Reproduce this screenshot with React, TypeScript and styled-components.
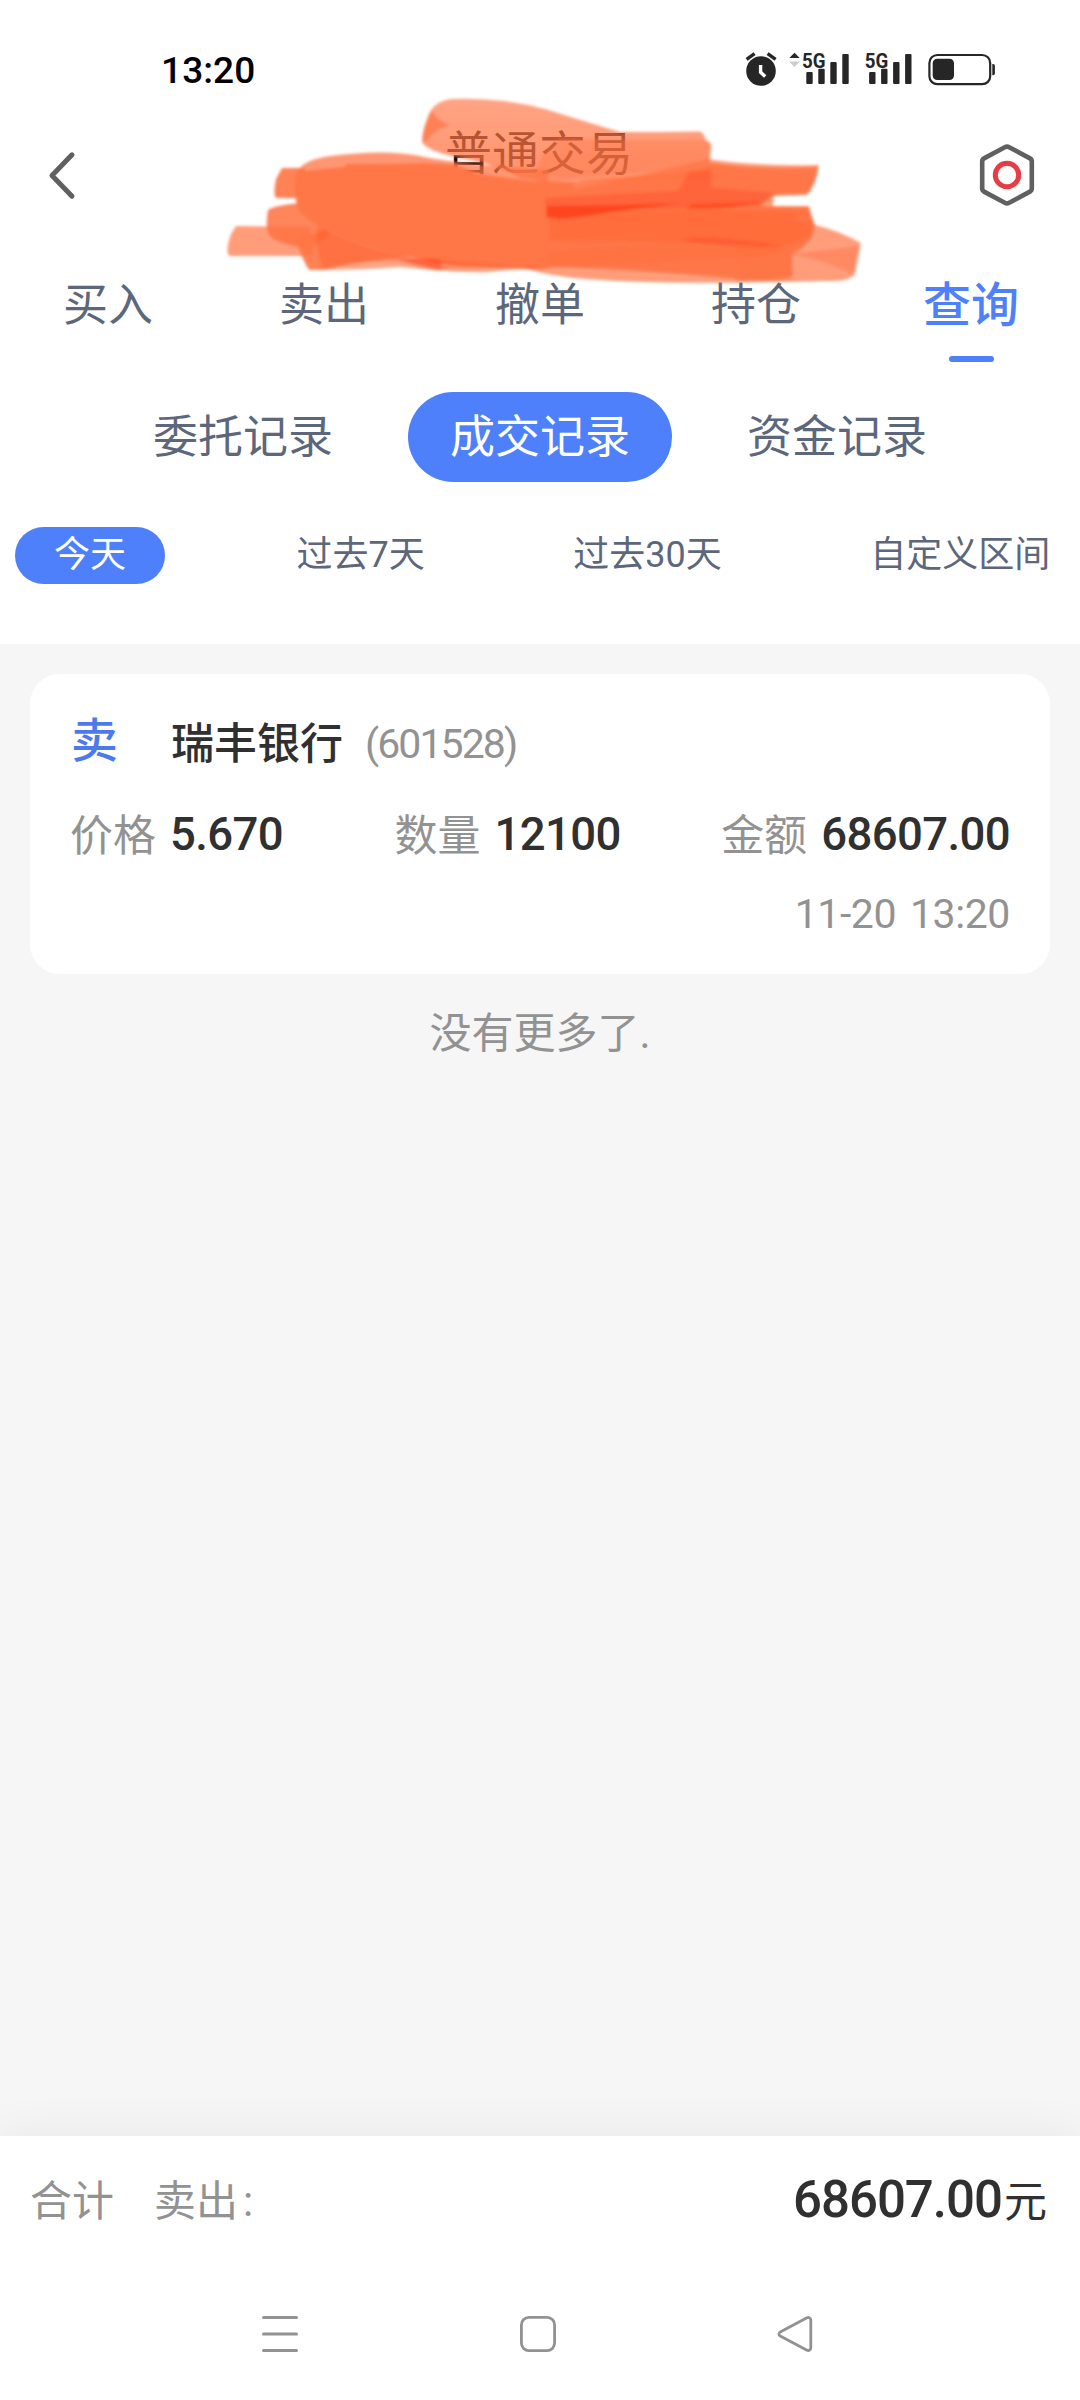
import React from 'react';
import styled, { createGlobalStyle } from 'styled-components';

const BLUE = '#4f80fc';
const SLATE = '#5d677c';
const GREY = '#929292';
const INK = '#303030';

const GlobalStyle = createGlobalStyle`
  *, *::before, *::after { box-sizing: border-box; }
  body {
    margin: 0;
    background: #fff;
    font-family: Roboto, 'Noto Sans CJK SC', sans-serif;
  }
  svg { display: block; }
`;

const Screen = styled.div`
  position: relative;
  display: flex;
  flex-direction: column;
  width: 1080px;
  height: 2400px;
  overflow: hidden;
  background: #fff;
`;

const StatusBar = styled.div`
  display: flex;
  justify-content: space-between;
  align-items: center;
  height: 100px;
  padding: 40px 84px 0 161px;
`;

const Clock = styled.span`
  padding-top: 1px;
  font-size: 37px;
  line-height: 60px;
  font-weight: 500;
  letter-spacing: 0.1px;
  color: #000;
`;

const Header = styled.header`
  display: grid;
  grid-template-columns: 56px 1fr 56px;
  align-items: center;
  height: 150px;
  padding: 0 45px 0 47px;
`;

const Title = styled.h1`
  margin: 0 4px 42px 0;
  text-align: center;
  font-size: 47px;
  line-height: 60px;
  font-weight: 400;
  color: #000;
`;

const Redaction = styled.svg`
  position: absolute;
  left: 215px;
  top: 85px;
`;

const Tabs = styled.nav`
  display: grid;
  grid-template-columns: repeat(5, 1fr);
  height: 112px;
  padding: 25px 0 0 0;
`;

const Tab = styled.div<{ $active?: boolean }>`
  display: flex;
  flex-direction: column;
  align-items: center;
  padding-right: ${(p) => (p.$active ? 2 : 0)}px;
  font-size: ${(p) => (p.$active ? 48 : 45)}px;
  line-height: 61px;
  font-weight: ${(p) => (p.$active ? 500 : 400)};
  color: ${(p) => (p.$active ? BLUE : SLATE)};
`;

const Underline = styled.span`
  width: 45px;
  height: 6px;
  margin-top: 20px;
  border-radius: 3px;
  background: ${BLUE};
`;

const SubTabs = styled.nav`
  display: flex;
  justify-content: center;
  gap: 33px;
  height: 90px;
  margin-top: 30px;
`;

const SubTab = styled.div<{ $active?: boolean }>`
  width: 264px;
  border-radius: 45px;
  text-align: center;
  font-size: 45px;
  line-height: 92px;
  color: ${(p) => (p.$active ? '#fff' : SLATE)};
  background: ${(p) => (p.$active ? BLUE : 'transparent')};
`;

const Ranges = styled.div`
  display: flex;
  gap: 148.5px;
  height: 162px;
  padding: 45px 0 60px 15px;
`;

const Range = styled.div<{ $active?: boolean }>`
  height: 57px;
  width: ${(p) => (p.$active ? '150px' : 'auto')};
  margin-right: ${(p) => (p.$active ? '-17px' : '0')};
  border-radius: 28.5px;
  text-align: center;
  white-space: nowrap;
  font-size: 36px;
  line-height: 56px;
  color: ${(p) => (p.$active ? '#fff' : SLATE)};
  background: ${(p) => (p.$active ? BLUE : 'transparent')};
`;

const Content = styled.main`
  flex: 1;
  padding: 30px 30px 0;
  background: #f6f6f6;
`;

const Card = styled.article`
  display: flex;
  flex-direction: column;
  height: 300px;
  padding: 40px 40px 30px;
  border-radius: 30px;
  background: #fff;
`;

const StockRow = styled.div`
  display: flex;
  align-items: center;
  height: 60px;
`;

const Side = styled.span`
  width: 101px;
  font-size: 47px;
  line-height: 56px;
  padding: 0 0 6px 1px;
  font-weight: 500;
  color: #4d79ef;
`;

const StockName = styled.span`
  font-size: 43px;
  line-height: 60px;
  font-weight: 500;
  color: ${INK};
`;

const Code = styled.span`
  margin-left: 22px;
  font-size: 41px;
  line-height: 58px;
  letter-spacing: -1.9px;
  color: ${GREY};
`;

const Figures = styled.div`
  display: flex;
  justify-content: space-between;
  height: 60px;
  margin-top: 32px;
`;

const Figure = styled.div`
  display: flex;
  gap: 14px;

  &:nth-child(2) {
    margin-left: 11px;
  }
`;

const Label = styled.span`
  font-size: 43px;
  line-height: 60px;
  color: ${GREY};
`;

const Value = styled.span`
  font-size: 45.5px;
  line-height: 57px;
  font-weight: 500;
  letter-spacing: -0.6px;
  color: ${INK};
`;

const Stamp = styled.time`
  align-self: flex-end;
  margin-top: 18px;
  font-size: 41px;
  line-height: 60px;
  letter-spacing: -0.4px;
  word-spacing: 4px;
  color: ${GREY};
`;

const EndNote = styled.p`
  margin: 29px 0 0;
  text-align: center;
  font-size: 42px;
  line-height: 61px;
  color: ${GREY};
`;

const Summary = styled.footer`
  display: flex;
  justify-content: space-between;
  height: 132px;
  padding: 36px 33px 0 30px;
  background: #fff;
  box-shadow: 0 0 50px rgba(0, 0, 0, 0.065);
`;

const SummaryLabels = styled.div`
  display: flex;
  gap: 40px;
  font-size: 42px;
  line-height: 60px;
  color: ${GREY};
`;

const Colon = styled.span`
  margin-left: 5px;
`;

const Total = styled.div`
  font-size: 51px;
  line-height: 55px;
  font-weight: 500;
  letter-spacing: -1px;
  color: ${INK};
`;

const Unit = styled.span`
  margin-left: 2px;
  font-size: 43px;
  letter-spacing: 0;
  font-weight: 400;
`;

const SystemNav = styled.div`
  position: relative;
  display: flex;
  justify-content: space-between;
  align-items: center;
  height: 132px;
  padding: 0 264px 0 260px;
  background: #fff;
`;

const Signal = ({ x }: { x: number }) => (
  <g transform={`translate(${x} 0)`}>
    <text
      x="-4"
      y="27.6"
      fontFamily="Roboto, sans-serif"
      fontSize="21"
      fontWeight="700"
      textLength="23.5"
      lengthAdjust="spacingAndGlyphs"
    >
      5G
    </text>
    <rect x="0.3" y="32" width="6.4" height="12" rx="1" />
    <rect x="12.3" y="28.7" width="6.4" height="15.3" rx="1" />
    <rect x="24.3" y="22" width="6.4" height="22" rx="1" />
    <rect x="36.3" y="14" width="6.4" height="30" rx="1" />
  </g>
);

const StatusIcons = () => (
  <svg width="254" height="60" viewBox="0 0 254 60" fill="#262626">
    <circle cx="19" cy="31" r="14.8" />
    <path d="M4.6 19.3 12.6 13.6M25.6 13.6 33.6 19.3" stroke="#262626" strokeWidth="3.4" fill="none" />
    <path d="M18.6 25v7.2l4.6 4.4" stroke="#fff" strokeWidth="3.4" fill="none" />
    <path d="M47.3 18h10.4l-5.2-5.3z" />
    <path d="M47.3 21.6h10.4l-5.2 5.3z" fill="#ccc" />
    <Signal x={64} />
    <Signal x={126.8} />
    <rect x="187.4" y="15" width="60.8" height="29.2" rx="8" fill="none" stroke="#262626" strokeWidth="2.2" />
    <rect x="190.7" y="18.7" width="21.3" height="21.4" rx="4.5" />
    <path d="M250.3 24h.8a1.8 1.8 0 0 1 1.8 1.8v7.6a1.8 1.8 0 0 1-1.8 1.8h-.8z" />
  </svg>
);

const BackIcon = () => (
  <svg width="30" height="50" viewBox="0 0 30 50" fill="none" stroke="#606060" strokeWidth="5" strokeLinecap="round" strokeLinejoin="round">
    <path d="M25 4.8 5 25.5 25 46.2" />
  </svg>
);

const SettingsIcon = () => (
  <svg width="56" height="62" viewBox="0 0 56 62" fill="none">
    <path
      d="M25.8 3.2a4.6 4.6 0 0 1 4.4 0L51 14.4a3.4 3.4 0 0 1 1.8 3v27.2a3.4 3.4 0 0 1-1.8 3L30.2 58.8a4.6 4.6 0 0 1-4.4 0L5 47.6a3.4 3.4 0 0 1-1.8-3V17.4a3.4 3.4 0 0 1 1.8-3z"
      stroke="#606060"
      strokeWidth="4.6"
    />
    <circle cx="28" cy="31" r="11.7" stroke="#e93b44" strokeWidth="5" />
  </svg>
);

const Scribble = () => (
  <Redaction width="660" height="210" viewBox="215 85 660 210">
    <defs>
      <filter id="soft" x="-5%" y="-10%" width="110%" height="120%">
        <feGaussianBlur stdDeviation="1.4" />
      </filter>
      <linearGradient id="fade" x1="0" y1="0" x2="0" y2="1">
        <stop offset="0" stopColor="#ff7444" stopOpacity="0.66" />
        <stop offset="0.5" stopColor="#ff7444" stopOpacity="0.72" />
        <stop offset="1" stopColor="#ff7444" stopOpacity="0.8" />
      </linearGradient>
    </defs>
    <g filter="url(#soft)" fill="#ff7444">
      <path d="M427 119Q432 101 452 99Q500 97 545 109Q590 123 620 132Q665 132 700 131.5Q705 134 706 141Q712 142 711 149L710 158L712 180L548 182L520 178Q500 165 456 157Q425 150 422 142Q422 132 427 119Z" fill="url(#fade)" />
      <path d="M432 111Q437 121 450 125Q438 127 428 139L423 142Q422 128 432 111Z" opacity="0.7" />
      <path d="M560 138Q630 141 706 140L711 142L709 159L704 169Q640 171 570 178L535 176Q540 150 560 138Z" opacity="0.35" />
      <path d="M709 159Q750 166 819 165Q816 186 807 195L774 196L773 206L809 206L812 224Q840 231 861 243L855 274Q850 282 825 281Q680 285 601 280Q550 277 525 268L540 195L630 178Z" opacity="0.7" />
      <path d="M712 163Q760 170 818 167Q815 186 807 194L774 195L760 206L809 207L815 226Q812 244 791 255L793 276Q780 282 740 279Q650 270 535 266L540 185L640 176L702 170Z" opacity="0.9" />
      <path d="M810 227Q811 245 790 254Q820 251 859 246L853 274Q822 259 793 255L791 279L735 281L740 226Z" opacity="0.45" />
      <path d="M282 168L305 168L304 198L276 198Q273 195 276 179Z" opacity="0.9" />
      <path d="M268 210Q274 205 310 202L330 235L310 248Q285 246 272 238Q264 232 268 210Z" opacity="0.88" />
      <path d="M236 226L310 227L314 256L229 256Q225 251 231 234Z" opacity="0.7" />
      <path d="M296 240L340 224L410 257Q370 259 323 270L310 270Q305 267 296 240Z" opacity="0.9" />
      <path d="M323 270Q370 260 400 257L480 258L550 263L548 269Q510 269 490 272Q460 273 400 267Q360 270 323 270Z" opacity="0.65" />
      <path d="M296 175Q300 160 330 156Q385 149 420 156Q450 163 548 170L549 265Q495 270 440 264Q385 252 326 229Q298 217 296 202Q294 188 296 175Z" opacity="0.75" />
      <path d="M297 172Q330 168 345 167L346 164Q400 164 424 163L455 165L480 174L530 181L574 182L574 192L549 196L550 267Q465 269 420 258Q360 249 318 224Q294 213 296 185Z" fill="#ff7747" />
    </g>
    <g filter="url(#soft)" fill="#ff3c16">
      <path d="M545 198Q620 194 678 191L689 172L711 170L711 188L774 193L760 205L712 208Q625 208 590 216Q560 220 546 217Z" opacity="0.3" />
      <path d="M547 206Q615 206 680 203Q635 208 590 215Q560 220 547 217Z" opacity="0.8" />
      <path d="M692 204L760 202Q735 210 686 209Z" opacity="0.5" />
      <path d="M550 219Q650 206 808 212Q780 222 812 220L812 236Q790 246 770 247Q700 243 549 240Z" opacity="0.16" />
      <path d="M700 237Q740 239 785 246Q738 249 680 240Z" opacity="0.3" />
      <path d="M548 252Q620 244 790 248L760 256Q630 262 549 268Z" opacity="0.08" />
      <path d="M318 225Q360 251 420 258L520 267L441 270Q390 253 323 269Q314 243 318 225Z" opacity="0.22" />
      <path d="M398 259Q430 258 441 260L441 270Q420 267 398 259Z" opacity="0.5" />
      <path d="M440 262Q500 268 549 266L530 269Z" opacity="0.4" />
    </g>
  </Redaction>
);

const MenuIcon = () => (
  <svg width="40" height="40" viewBox="0 0 40 40" stroke="#929292" strokeWidth="3" strokeLinecap="round">
    <path d="M3.5 3.5h33M3.5 20h33M3.5 36.5h33" />
  </svg>
);

const HomeIcon = () => (
  <svg width="40" height="40" viewBox="0 0 40 40" fill="none" stroke="#929292" strokeWidth="2.8">
    <rect x="3.4" y="3.4" width="33.2" height="33.2" rx="7.5" />
  </svg>
);

const ReturnIcon = () => (
  <svg width="40" height="40" viewBox="0 0 40 40" fill="none" stroke="#929292" strokeWidth="2.8" strokeLinejoin="round">
    <path d="M4.2 17.9 31 3.8a2.6 2.6 0 0 1 3.8 2.3v27.8a2.6 2.6 0 0 1-3.8 2.3L4.2 22.1a2.4 2.4 0 0 1 0-4.2z" />
  </svg>
);

const tabs = ['买入', '卖出', '撤单', '持仓', '查询'];
const records = ['委托记录', '成交记录', '资金记录'];
const ranges = ['今天', '过去7天', '过去30天', '自定义区间'];
const figures = [
  ['价格', '5.670'],
  ['数量', '12100'],
  ['金额', '68607.00'],
];

export default function App() {
  return (
    <>
      <GlobalStyle />
      <Screen>
        <StatusBar>
          <Clock>13:20</Clock>
          <StatusIcons />
        </StatusBar>
        <Header>
          <BackIcon />
          <Title>普通交易</Title>
          <SettingsIcon />
        </Header>
        <Scribble />
        <Tabs>
          {tabs.map((t) => (
            <Tab key={t} $active={t === '查询'}>
              {t}
              {t === '查询' && <Underline />}
            </Tab>
          ))}
        </Tabs>
        <SubTabs>
          {records.map((r) => (
            <SubTab key={r} $active={r === '成交记录'}>
              {r}
            </SubTab>
          ))}
        </SubTabs>
        <Ranges>
          {ranges.map((r) => (
            <Range key={r} $active={r === '今天'}>
              {r}
            </Range>
          ))}
        </Ranges>
        <Content>
          <Card>
            <StockRow>
              <Side>卖</Side>
              <StockName>瑞丰银行</StockName>
              <Code>(601528)</Code>
            </StockRow>
            <Figures>
              {figures.map(([label, value]) => (
                <Figure key={label}>
                  <Label>{label}</Label>
                  <Value>{value}</Value>
                </Figure>
              ))}
            </Figures>
            <Stamp>11-20 13:20</Stamp>
          </Card>
          <EndNote>没有更多了.</EndNote>
        </Content>
        <Summary>
          <SummaryLabels>
            <span>合计</span>
            <span>
              卖出<Colon>:</Colon>
            </span>
          </SummaryLabels>
          <Total>
            68607.00<Unit>元</Unit>
          </Total>
        </Summary>
        <SystemNav>
          <MenuIcon />
          <HomeIcon />
          <ReturnIcon />
        </SystemNav>
      </Screen>
    </>
  );
}
